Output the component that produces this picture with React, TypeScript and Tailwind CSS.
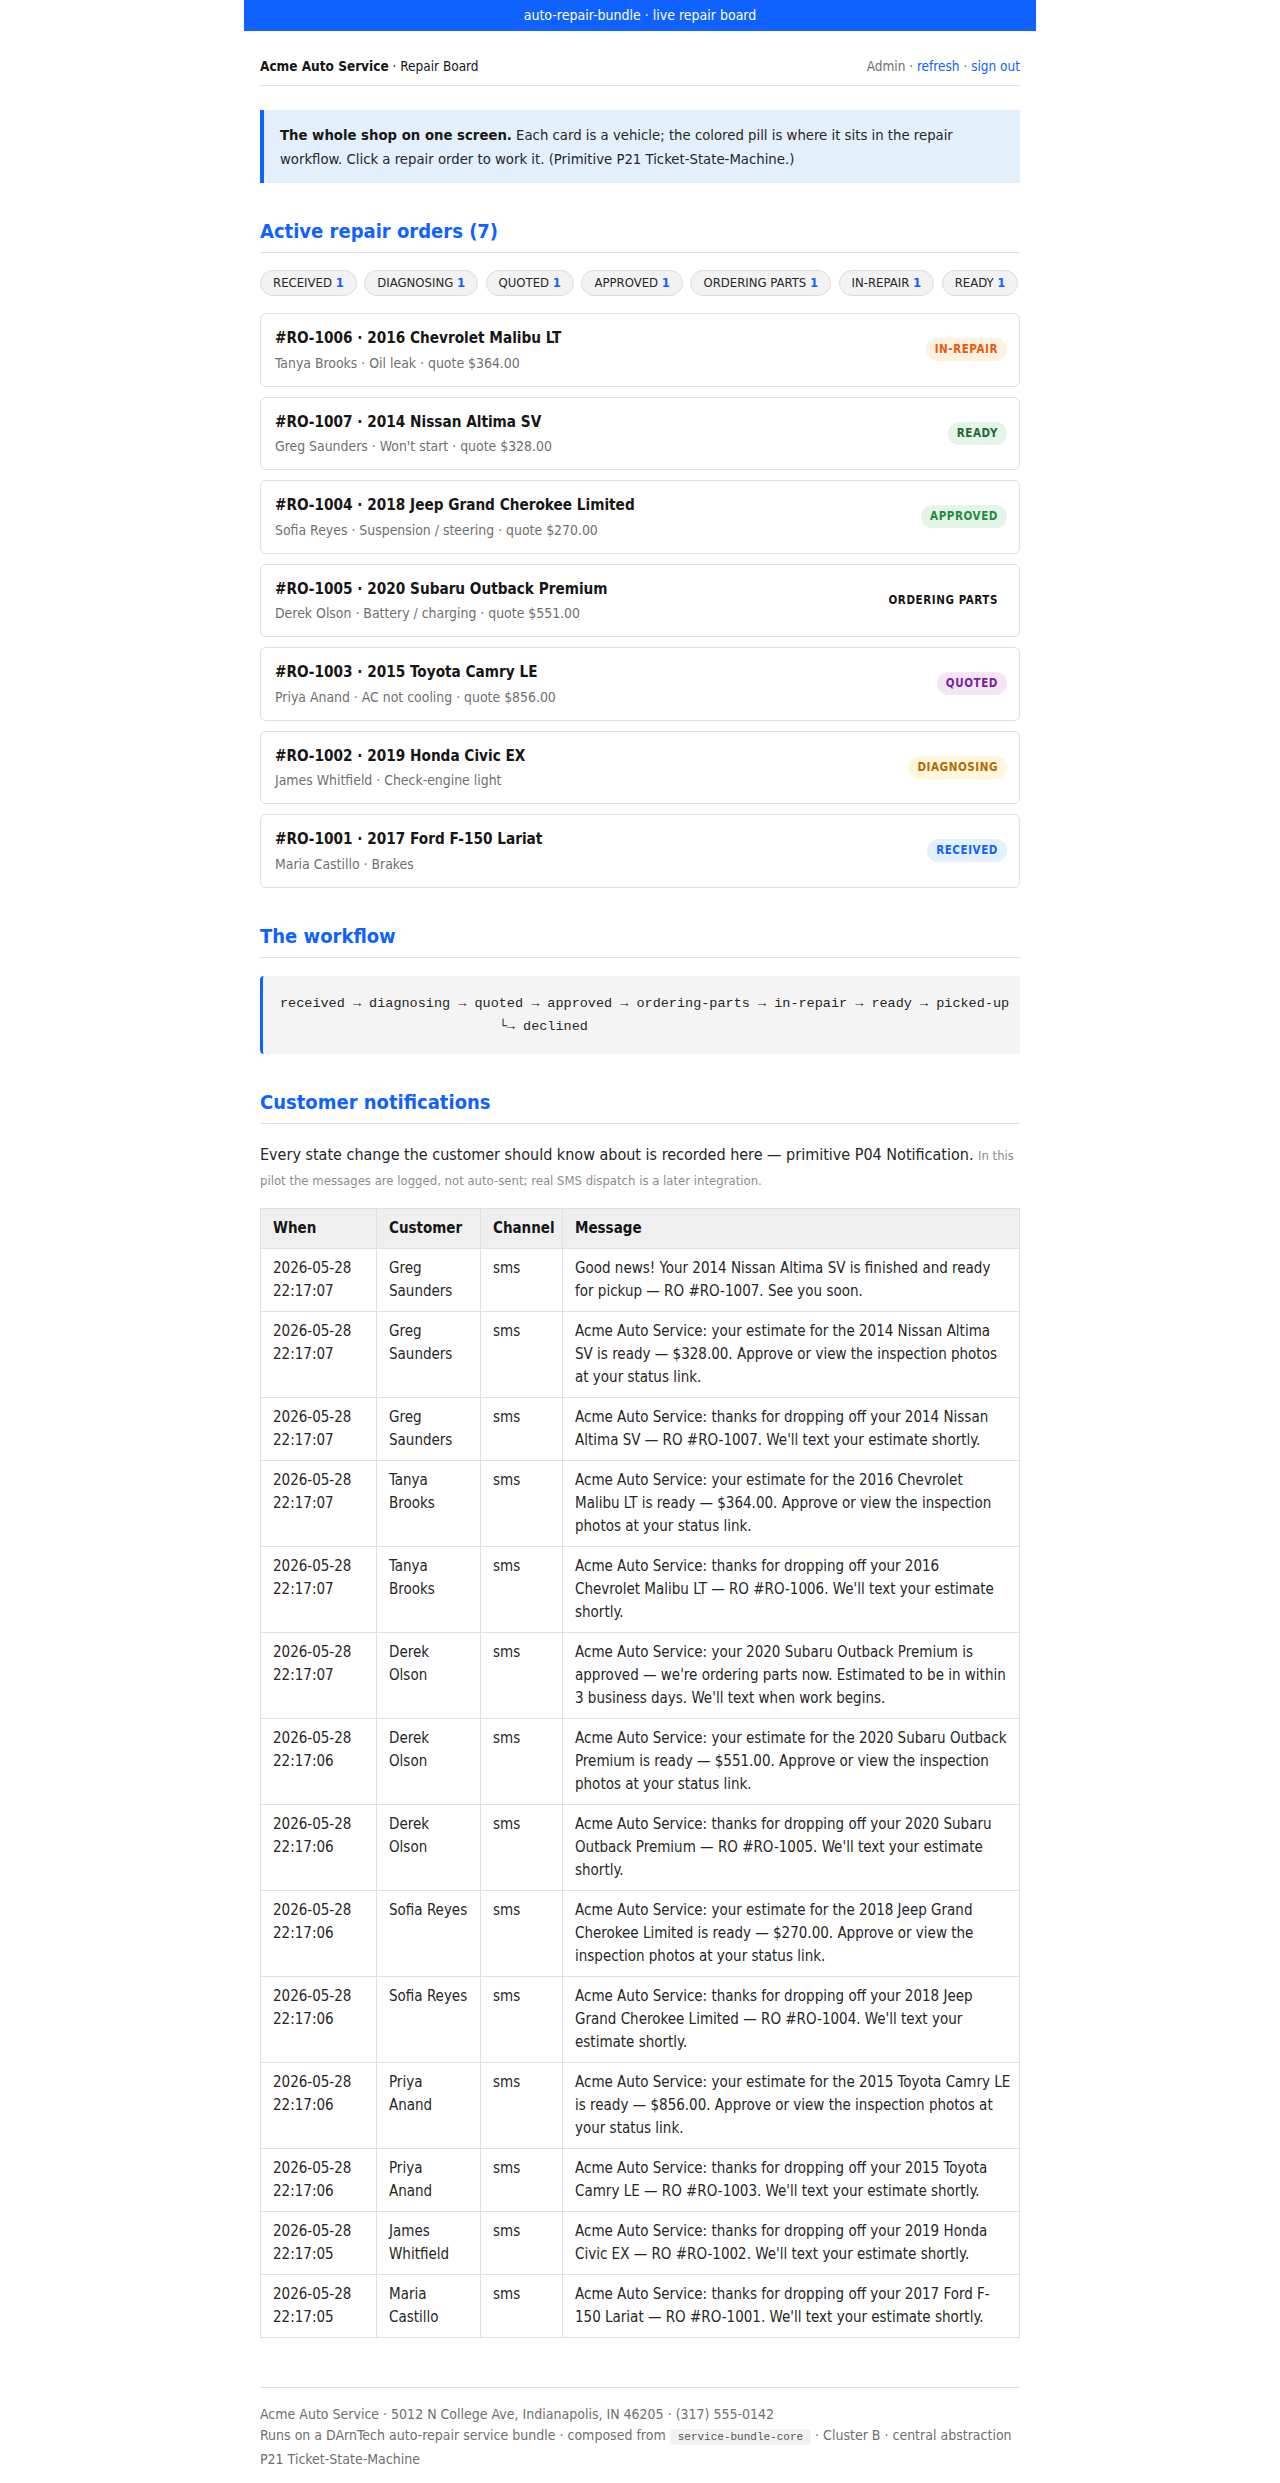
const BADGE: Record<string, string> = {
  "in-repair": "bg-[#fff1e0] text-[#e8590c]",
  ready: "bg-[#e5f4e9] text-[#1d6b31]",
  approved: "bg-[#e5f4e9] text-[#24893d]",
  "ordering parts": "bg-transparent text-[#161616]",
  quoted: "bg-[#f4e6f6] text-[#7b1fa2]",
  diagnosing: "bg-[#fff6dc] text-[#b26a00]",
  received: "bg-[#e3f0ff] text-[#0f62fe]",
};

const ORDERS = [
  { id: "RO-1006", car: "2016 Chevrolet Malibu LT", sub: "Tanya Brooks · Oil leak · quote $364.00", state: "in-repair" },
  { id: "RO-1007", car: "2014 Nissan Altima SV", sub: "Greg Saunders · Won't start · quote $328.00", state: "ready" },
  { id: "RO-1004", car: "2018 Jeep Grand Cherokee Limited", sub: "Sofia Reyes · Suspension / steering · quote $270.00", state: "approved" },
  { id: "RO-1005", car: "2020 Subaru Outback Premium", sub: "Derek Olson · Battery / charging · quote $551.00", state: "ordering parts" },
  { id: "RO-1003", car: "2015 Toyota Camry LE", sub: "Priya Anand · AC not cooling · quote $856.00", state: "quoted" },
  { id: "RO-1002", car: "2019 Honda Civic EX", sub: "James Whitfield · Check-engine light", state: "diagnosing" },
  { id: "RO-1001", car: "2017 Ford F-150 Lariat", sub: "Maria Castillo · Brakes", state: "received" },
];

const COUNTS = ["received", "diagnosing", "quoted", "approved", "ordering parts", "in-repair", "ready"];

// message lines are kept as they wrap in the log view
const NOTES: [string, string, string][] = [
  ["22:17:07", "Greg Saunders", "Good news! Your 2014 Nissan Altima SV is finished and ready\nfor pickup — RO #RO-1007. See you soon."],
  ["22:17:07", "Greg Saunders", "Acme Auto Service: your estimate for the 2014 Nissan Altima\nSV is ready — $328.00. Approve or view the inspection photos\nat your status link."],
  ["22:17:07", "Greg Saunders", "Acme Auto Service: thanks for dropping off your 2014 Nissan\nAltima SV — RO #RO-1007. We'll text your estimate shortly."],
  ["22:17:07", "Tanya Brooks", "Acme Auto Service: your estimate for the 2016 Chevrolet\nMalibu LT is ready — $364.00. Approve or view the inspection\nphotos at your status link."],
  ["22:17:07", "Tanya Brooks", "Acme Auto Service: thanks for dropping off your 2016\nChevrolet Malibu LT — RO #RO-1006. We'll text your estimate\nshortly."],
  ["22:17:07", "Derek Olson", "Acme Auto Service: your 2020 Subaru Outback Premium is\napproved — we're ordering parts now. Estimated to be in within\n3 business days. We'll text when work begins."],
  ["22:17:06", "Derek Olson", "Acme Auto Service: your estimate for the 2020 Subaru Outback\nPremium is ready — $551.00. Approve or view the inspection\nphotos at your status link."],
  ["22:17:06", "Derek Olson", "Acme Auto Service: thanks for dropping off your 2020 Subaru\nOutback Premium — RO #RO-1005. We'll text your estimate\nshortly."],
  ["22:17:06", "Sofia Reyes", "Acme Auto Service: your estimate for the 2018 Jeep Grand\nCherokee Limited is ready — $270.00. Approve or view the\ninspection photos at your status link."],
  ["22:17:06", "Sofia Reyes", "Acme Auto Service: thanks for dropping off your 2018 Jeep\nGrand Cherokee Limited — RO #RO-1004. We'll text your\nestimate shortly."],
  ["22:17:06", "Priya Anand", "Acme Auto Service: your estimate for the 2015 Toyota Camry LE\nis ready — $856.00. Approve or view the inspection photos at\nyour status link."],
  ["22:17:06", "Priya Anand", "Acme Auto Service: thanks for dropping off your 2015 Toyota\nCamry LE — RO #RO-1003. We'll text your estimate shortly."],
  ["22:17:05", "James Whitfield", "Acme Auto Service: thanks for dropping off your 2019 Honda\nCivic EX — RO #RO-1002. We'll text your estimate shortly."],
  ["22:17:05", "Maria Castillo", "Acme Auto Service: thanks for dropping off your 2017 Ford F-\n150 Lariat — RO #RO-1001. We'll text your estimate shortly."],
];

function SectionTitle({ children }: { children: React.ReactNode }) {
  return (
    <h2 className="mt-[34px] border-b border-[#e0e0e0] pb-[7px] text-[20px] font-bold leading-7 text-[#0f62fe]">
      {children}
    </h2>
  );
}

export default function App() {
  return (
    <div className="min-h-screen bg-white font-['DejaVu_Sans_Condensed','DejaVu_Sans',sans-serif] text-[#161616]">
      <div className="mx-auto w-[792px]">
        {/* top strip */}
        <div className="flex h-[31px] items-center justify-center bg-[#0f62fe] text-[14px] text-white">
          auto-repair-bundle · live repair board
        </div>

        <div className="px-4 pb-[13px]">
          {/* header */}
          <div className="flex items-center justify-between border-b border-[#e0e0e0] pb-[9px] pt-[25px] text-[13.5px] leading-5">
            <div>
              <span className="font-bold">Acme Auto Service</span> · Repair Board
            </div>
            <div className="text-[#6f6f6f]">
              Admin · <a className="text-[#0f62fe]">refresh</a> · <a className="text-[#0f62fe]">sign out</a>
            </div>
          </div>

          {/* intro */}
          <div className="mt-6 border-l-4 border-[#0f62fe] bg-[#e3effb] pb-3 pl-4 pr-4 pt-[13px] text-[14.75px] leading-6 text-[#262626]">
            <b className="text-[#161616]">The whole shop on one screen.</b> Each card is a vehicle; the colored pill is where it sits in the repair
            workflow. Click a repair order to work it. (Primitive P21 Ticket-State-Machine.)
          </div>

          <SectionTitle>Active repair orders (7)</SectionTitle>

          <div className="mt-[17px] flex flex-wrap gap-[7.5px]">
            {COUNTS.map((c) => (
              <span
                key={c}
                className="flex h-[26px] items-center rounded-full border border-[#dcdcdc] bg-[#f2f2f2] px-3 text-[13px] uppercase text-[#262626]"
              >
                {c}&nbsp;<b className="text-[#0f62fe]">1</b>
              </span>
            ))}
          </div>

          <div className="mt-[17px] flex flex-col gap-[10px]">
            {ORDERS.map((o) => (
              <div
                key={o.id}
                className="flex items-center justify-between rounded-md border border-[#e0e0e0] bg-white py-[13px] pl-[14px] pr-3"
              >
                <div>
                  <div className="text-[15.2px] font-bold leading-[22px]">
                    #{o.id} · {o.car}
                  </div>
                  <div className="mt-[3.5px] text-[13.9px] leading-5 text-[#6f6f6f]">{o.sub}</div>
                </div>
                <span
                  className={`rounded-full px-[9px] py-[3px] text-[11.5px] font-bold uppercase leading-[17px] tracking-[0.05em] ${BADGE[o.state]}`}
                >
                  {o.state}
                </span>
              </div>
            ))}
          </div>

          <SectionTitle>The workflow</SectionTitle>

          <pre className="mt-[18px] rounded-[4px] border-l-[3px] border-[#0f62fe] bg-[#f4f4f4] py-4 pl-[17px] pr-4 font-['Liberation_Mono',monospace] text-[13.5px] leading-[23px] text-[#262626]">
{`received → diagnosing → quoted → approved → ordering-parts → in-repair → ready → picked-up
                           └→ declined`}
          </pre>

          <SectionTitle>Customer notifications</SectionTitle>

          <p className="mt-[18px] text-[16px] leading-[25px] text-[#262626]">
            Every state change the customer should know about is recorded here — primitive P04 Notification.{" "}
            <span className="text-[13px] leading-4 text-[#8d8d8d]">
              In this pilot the messages are logged, not auto-sent; real SMS dispatch is a later integration.
            </span>
          </p>

          <table className="mt-4 w-full table-fixed border-collapse text-left text-[15px] leading-[23px] text-[#262626]">
            <colgroup>
              <col className="w-[116px]" />
              <col className="w-[104px]" />
              <col className="w-[82px]" />
              <col />
            </colgroup>
            <thead>
              <tr className="bg-[#efefef]">
                {["When", "Customer", "Channel", "Message"].map((h) => (
                  <th key={h} className="border border-[#e0e0e0] px-3 py-2 align-top font-bold text-[#161616]">
                    {h}
                  </th>
                ))}
              </tr>
            </thead>
            <tbody>
              {NOTES.map(([t, who, msg], i) => (
                <tr key={i}>
                  <td className="border border-[#e0e0e0] px-3 py-2 align-top">2026-05-28 {t}</td>
                  <td className="border border-[#e0e0e0] px-3 py-2 align-top">{who}</td>
                  <td className="border border-[#e0e0e0] px-3 py-2 align-top">sms</td>
                  <td className="whitespace-pre border border-[#e0e0e0] px-3 py-2 align-top">{msg}</td>
                </tr>
              ))}
            </tbody>
          </table>

          {/* footer */}
          <div className="mt-[49px] border-t border-[#e0e0e0] pt-4 text-[14px] leading-[21.5px] text-[#6f6f6f]">
            <div>Acme Auto Service · 5012 N College Ave, Indianapolis, IN 46205 · (317) 555-0142</div>
            <div>
              Runs on a DArnTech auto-repair service bundle · composed from{" "}
              <code className="rounded bg-[#f2f2f2] px-2 py-[2px] font-['Liberation_Mono',monospace] text-[11px] text-[#525252]">
                service-bundle-core
              </code>{" "}
              · Cluster B · central abstraction P21 Ticket-State-Machine
            </div>
          </div>
        </div>
      </div>
    </div>
  );
}
